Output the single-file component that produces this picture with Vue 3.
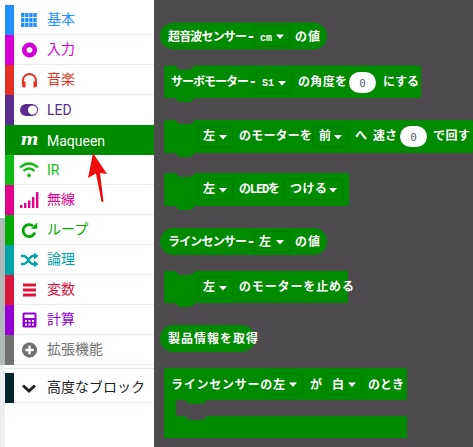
<template>
  <div class="page">
    <div class="gutter"></div>
    <div class="toolbox">
      <div class="cats">
        <div v-for="c in categories" :key="c.name" class="row" :class="c.cls">
          <span class="strip"></span>
          <svg class="icon" width="20" height="20" viewBox="0 0 20 20">
            <template v-for="(p, i) in c.icon" :key="i">
              <text v-if="p.text" x="1.500" y="15" class="logo-m">{{ p.text }}</text>
              <path
                v-else
                :d="p.d"
                :fill="p.w ? 'none' : (p.fill || 'currentColor')"
                :stroke="p.w ? 'currentColor' : 'none'"
                :stroke-width="p.w"
                fill-rule="evenodd"
              />
            </template>
          </svg>
          <span class="label">{{ c.name }}</span>
        </div>
      </div>
      <div class="row advanced">
        <span class="strip"></span>
        <svg class="icon" width="20" height="20" viewBox="0 0 20 20">
          <path d="M4 7.500l6 5.500 6-5.500" fill="none" stroke="currentColor" stroke-width="3" />
        </svg>
        <span class="label">高度なブロック</span>
      </div>
    </div>

    <div class="workspace">
      <svg
        v-for="b in blocks"
        :key="b.top"
        class="block"
        width="319"
        :height="b.h"
        :viewBox="`154 ${b.top} 319 ${b.h}`"
      >
        <path :d="b.shape" class="shape" />
        <g v-for="d in b.drops" :key="d.x">
          <rect :x="d.x" :y="d.y" :width="d.w" height="21" rx="3" class="drop" />
          <path :d="`M${d.x + d.w - 14} ${d.y + 9}h8l-4 4.500z`" class="caret" />
        </g>
        <g v-for="n in b.nums" :key="n.x">
          <rect :x="n.x" :y="n.y" width="27" height="21" rx="10.500" class="num" />
          <text :x="n.x + 13.500" :y="n.y + 15" class="num-text">0</text>
        </g>
        <text
          v-for="t in b.texts"
          :key="t[0] + t[2]"
          :x="t[0]"
          :y="t[1]"
          :textLength="t[3]"
          lengthAdjust="spacing"
          class="txt"
          :class="{ small: t[4] }"
        >{{ t[2] }}</text>
      </svg>
    </div>

    <svg class="arrow" width="30" height="56" viewBox="0 0 30 56">
      <path d="M9 1L4 26l8-4.500 5.500 28.500 2-.4L16 21l7 1z" fill="#f00c0c" />
    </svg>
  </div>
</template>

<script setup>
// grid icon is just a lot of little squares
let gridCells = ''
for (let r = 0; r < 3; r++) {
  for (let c = 0; c < 4; c++) {
    gridCells += `M${2 + c * 4.1} ${3 + r * 4.9}h3.4v4.1h-3.4z`
  }
}

const categories = [
  { name: '基本', cls: 'basic', icon: [{ d: gridCells }] },
  { name: '入力', cls: 'input', icon: [{ d: 'M10.500 2.500a7.500 7.500 0 1 0 .01 0zM10.500 7a3 3 0 1 1-.01 0z' }] },
  {
    name: '音楽',
    cls: 'music',
    icon: [
      { d: 'M4 13v-2.500a6.500 6.500 0 0 1 13 0V13', w: 2 },
      { d: 'M3 11.500h3.500v6H5a2 2 0 0 1-2-2zM18 11.500h-3.500v6H16a2 2 0 0 0 2-2z' },
    ],
  },
  {
    name: 'LED',
    cls: 'led latin',
    icon: [
      { d: 'M7 4h6a6 6 0 0 1 0 12H7A6 6 0 0 1 7 4z' },
      { d: 'M13.500 5.500a4.500 4.500 0 1 0 .01 0z', fill: '#fff' },
    ],
  },
  { name: 'Maqueen', cls: 'maqueen latin', icon: [{ text: 'm' }] },
  {
    name: 'IR',
    cls: 'ir latin',
    icon: [
      { d: 'M1 7.500Q10-.5 19 7.500M4.500 11Q10 6 15.500 11', w: 2.3 },
      { d: 'M10 13.500a1.900 1.900 0 1 0 .01 0z' },
    ],
  },
  {
    name: '無線',
    cls: 'radio',
    icon: [{ d: 'M1 15h2.400v3H1zM5 13h2.400v5H5zM9 10.500h2.400V18H9zM13 7h2.400v11H13zM17 2h2.400v16H17z' }],
  },
  {
    name: 'ループ',
    cls: 'loops',
    icon: [
      { d: 'M15.800 12.500A6 6 0 1 1 14 6', w: 2.800 },
      { d: 'M12 8.800h6.200V2.600z' },
    ],
  },
  {
    name: '論理',
    cls: 'logic',
    icon: [
      { d: 'M2 6h3c3.500 0 5 8 9 8h2M2 14h3c3.500 0 5-8 9-8h2', w: 2.400 },
      { d: 'M15 2.500l4.500 3.500-4.500 3.500zM15 10.500l4.500 3.500-4.500 3.500z' },
    ],
  },
  { name: '変数', cls: 'vars', icon: [{ d: 'M4 3.500h13v3H4zM4 8.500h13v3H4zM4 13.500h13v3H4z' }] },
  {
    name: '計算',
    cls: 'math',
    icon: [
      {
        d: 'M5 2.500h11a1.500 1.500 0 0 1 1.500 1.500v12a1.500 1.500 0 0 1-1.500 1.500H5A1.500 1.500 0 0 1 3.500 16V4A1.500 1.500 0 0 1 5 2.500zM5.500 4.500v3.500h10V4.500zM6 10v2h2v-2zM9.500 10v2h2v-2zM13 10v2h2v-2zM6 13.500v2h2v-2zM9.500 13.500v2h2v-2zM13 13.500v2h2v-2z',
      },
    ],
  },
  {
    name: '拡張機能',
    cls: 'ext',
    icon: [
      { d: 'M10.500 2.500a7.500 7.500 0 1 0 .01 0z' },
      { d: 'M9.300 5.800h2.400v3h3v2.400h-3v3H9.300v-3h-3V8.800h3z', fill: '#fff' },
    ],
  },
]

// top dent / bottom tab of a stackable block
const dent = (x, y) => `L${x + 11} ${y}l3 3q1 1 3 1h8q2 0 3-1l3-3`
const tab = (x, y) => `L${x + 31} ${y}l-3 3q-1 1-3 1h-8q-2 0-3-1l-3-3`

const stack = (x, y, w, h) =>
  `M${x + 2} ${y}${dent(x, y)}L${x + w - 2} ${y}q2 0 2 2V${y + h - 2}q0 2-2 2${tab(x, y + h)}L${x + 2} ${y + h}q-2 0-2-2V${y + 2}q0-2 2-2z`

const pill = (x, y, w, h) =>
  `M${x + h / 2} ${y}H${x + w - h / 2}a${h / 2} ${h / 2} 0 0 1 0 ${h}H${x + h / 2}a${h / 2} ${h / 2} 0 0 1 0-${h}z`

// the "when" block, head + open slot + bottom arm
const cShape = (x, y, w) =>
  `M${x} ${y}H${x + w}V${y + 32}H${x + 43}l-3 3q-1 1-3 1h-10q-2 0-3-1l-3-3H${x + 12}V${y + 48}H${x + 21}l3 3q1 1 3 1h10q2 0 3-1l3-3H${x + w}V${y + 70}H${x}z`

const blocks = [
  {
    top: 22,
    h: 43,
    shape: pill(160, 22.500, 167, 27),
    drops: [{ x: 254, y: 25.500, w: 36 }],
    nums: [],
    texts: [
      [168, 41, '超音波センサー', 79],
      [247, 41, '--', 8],
      [260, 40.500, 'cm', 12, true],
      [295, 41, 'の値', 25],
    ],
  },
  {
    top: 65,
    h: 55,
    shape: stack(164, 65.500, 257, 32.500),
    drops: [{ x: 256, y: 72, w: 36 }],
    nums: [{ x: 349, y: 72 }],
    texts: [
      [171, 86, 'サーボモーター', 78],
      [249, 86, '--', 7],
      [262, 86, 'S1', 12, true],
      [298, 86, 'の角度を', 49],
      [383, 86, 'にする', 36],
    ],
  },
  {
    top: 120,
    h: 53,
    shape: stack(164, 120, 309, 33),
    drops: [
      { x: 198, y: 126, w: 35 },
      { x: 313, y: 126, w: 35 },
    ],
    nums: [{ x: 400, y: 126 }],
    texts: [
      [203, 140, '左', 12],
      [239, 140, 'のモーターを', 73],
      [319, 140, '前', 12],
      [355, 140, 'へ', 12],
      [373, 140, '速さ', 24],
      [433, 140, 'で回す', 37],
    ],
  },
  {
    top: 173,
    h: 55,
    shape: stack(164, 173, 185, 33),
    drops: [
      { x: 198, y: 179, w: 35 },
      { x: 284, y: 179, w: 59 },
    ],
    nums: [],
    texts: [
      [203, 193, '左', 12],
      [239, 193, 'のLEDを', 41],
      [290, 193, 'つける', 37],
    ],
  },
  {
    top: 228,
    h: 43,
    shape: pill(160, 228, 167, 27),
    drops: [{ x: 254, y: 231, w: 36 }],
    nums: [],
    texts: [
      [168, 246, 'ラインセンサー', 79],
      [247, 246, '--', 8],
      [259, 246, '左', 12],
      [295, 246, 'の値', 25],
    ],
  },
  {
    top: 271,
    h: 54,
    shape: stack(164, 271, 184, 32),
    drops: [{ x: 198, y: 277, w: 35 }],
    nums: [],
    texts: [
      [203, 291, '左', 12],
      [239, 291, 'のモーターを止める', 115],
    ],
  },
  {
    top: 325,
    h: 43,
    shape: pill(160, 325, 95, 27),
    drops: [],
    nums: [],
    texts: [[168, 343, '製品情報を取得', 90]],
  },
  {
    top: 368,
    h: 79,
    shape: cShape(164, 368, 243),
    drops: [
      { x: 267, y: 373.500, w: 36 },
      { x: 326, y: 373.500, w: 36 },
    ],
    nums: [],
    texts: [
      [171, 389, 'ラインセンサーの左', 114],
      [310, 389, 'が', 12],
      [332, 389, '白', 12],
      [368, 389, 'のとき', 36],
    ],
  },
]
</script>

<style>
html,
body {
  margin: 0;
  background: #4d4b4e;
}
</style>

<style scoped>
.page {
  position: relative;
  display: flex;
  width: 473px;
  height: 447px;
  overflow: hidden;
  font-family: Roboto, "Noto Sans CJK JP", sans-serif;
}

.gutter {
  width: 5px;
  flex: none;
  background: linear-gradient(to bottom, #fff 218px, #b1b8b8 218px, #b1b8b8 365px, #eef0f0 365px);
}

.toolbox {
  width: 149px;
  flex: none;
  padding-top: 5px;
  box-sizing: border-box;
  background: #fff;
}

.cats {
  margin-bottom: 4px;
  border-bottom: 1px solid #e3e6e8;
  padding-bottom: 3px;
}

.row {
  display: flex;
  align-items: center;
  height: 30px;
  box-sizing: border-box;
  border-bottom: 1px solid #e9eef2;
  color: var(--c);
  font-size: 14px;
}

.strip {
  width: 9px;
  align-self: stretch;
  margin-bottom: -1px;
  background: var(--c);
}

.icon {
  margin: 0 8px 0 5px;
  flex: none;
  overflow: visible;
}

.label {
  line-height: 1;
  padding-bottom: 2px;
  white-space: nowrap;
}

.latin .label {
  padding-bottom: 0;
  padding-top: 1px;
}

.basic { --c: #1e90ff; }
.input { --c: #d400d4; }
.music { --c: #e63022; }
.led { --c: #5c2d91; }
.ir { --c: #0fbc11; }
.radio { --c: #e3008c; }
.loops { --c: #00aa00; }
.logic { --c: #00a4a6; }
.vars { --c: #dc143c; }
.math { --c: #9400d3; }
.ext { --c: #717171; }

.maqueen {
  --c: #008a00;
  background: #008a00;
  color: #fff;
  border-bottom: none;
}

.advanced {
  --c: #00272b;
  color: #222;
}

.logo-m {
  font-family: "DejaVu Serif", serif;
  font-style: italic;
  font-weight: 700;
  font-size: 17px;
  fill: #fff;
}

.workspace {
  flex: 1;
  padding-top: 22px;
  background: #4d4b4e;
  overflow: hidden;
}

.block {
  display: block;
}

.shape {
  fill: #008a00;
}

.drop {
  fill: #008a00;
  stroke: #007a00;
}

.caret {
  fill: #fff;
}

.num {
  fill: #fff;
}

.num-text {
  font-family: "DejaVu Sans Mono", monospace;
  font-size: 11px;
  fill: #575e75;
  text-anchor: middle;
}

.txt {
  font-family: "DejaVu Sans Mono", "Noto Sans CJK JP", monospace;
  font-size: 12px;
  font-weight: 700;
  fill: #fff;
}

.txt.small {
  font-family: "Liberation Mono", monospace;
  font-size: 10px;
}

.arrow {
  position: absolute;
  left: 84px;
  top: 152px;
}
</style>
